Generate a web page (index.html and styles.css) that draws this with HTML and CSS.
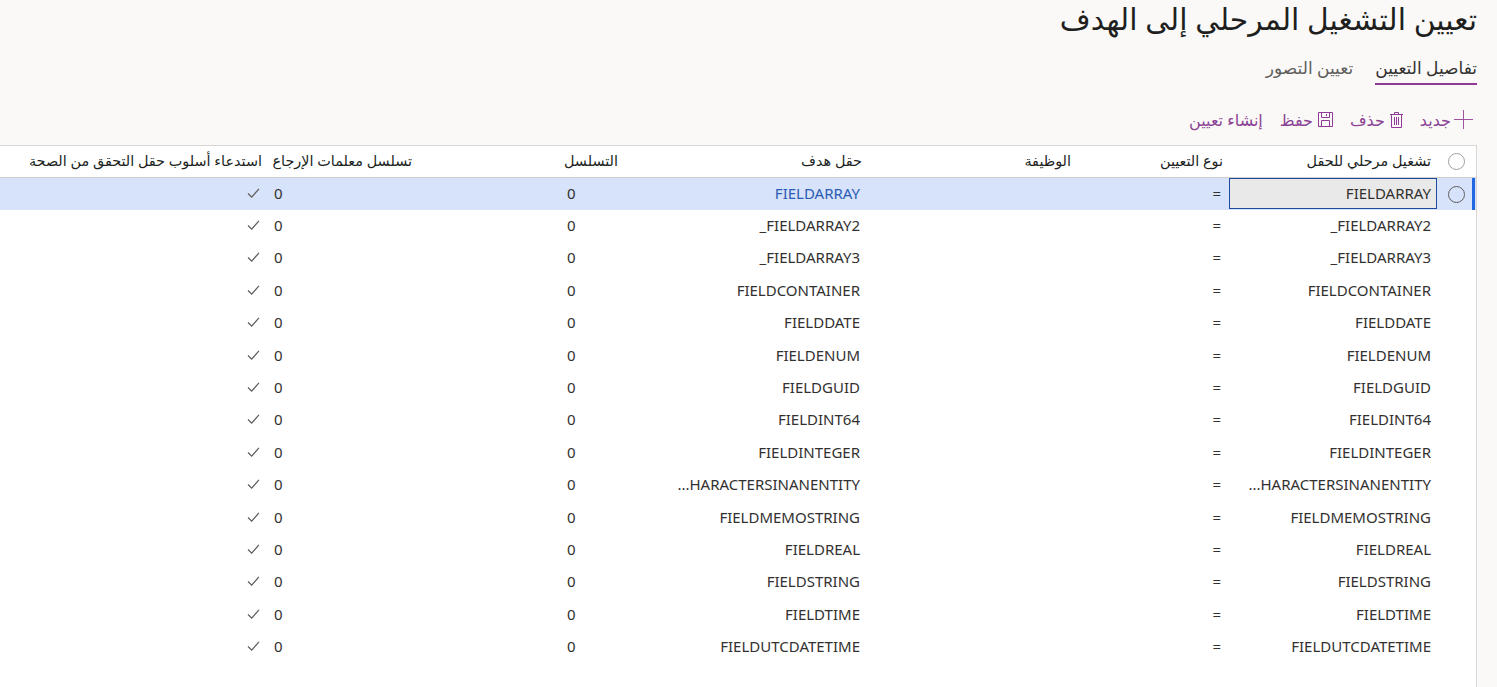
FILE: index.html
```html
<!DOCTYPE html>
<html lang="ar" dir="rtl">
<head>
<meta charset="utf-8">
<title>تعيين التشغيل المرحلي إلى الهدف</title>
<link rel="stylesheet" href="styles.css">
</head>
<body>
<main class="page">
  <h1 class="title">تعيين التشغيل المرحلي إلى الهدف</h1>
  <nav class="tabs">
    <a class="tab active">تفاصيل التعيين</a>
    <a class="tab">تعيين التصور</a>
  </nav>
  <div class="toolbar">
    <button class="tool"><svg class="icon plus" viewBox="0 0 19 19"><path d="M9.500 0v19M0 9.500h19"/></svg>جديد</button>
    <button class="tool"><svg class="icon trash" viewBox="0 0 13 16"><path d="M0 2.500h13M4.500 2.500v-2h4v2M1.500 2.500v13h10v-13M4.500 5v8M6.500 5v8M8.500 5v8"/></svg>حذف</button>
    <button class="tool"><svg class="icon save" viewBox="0 0 15 15"><path d="M.5.500h14v14H.5zM3.500.500v5h8v-5M3.500 14.500v-6h8v6M8.500 2v2"/></svg>حفظ</button>
    <button class="tool">إنشاء تعيين</button>
  </div>
  <section class="grid">
    <div class="row head">
      <div class="cell sel"><span class="radio"></span></div>
      <div class="cell">تشغيل مرحلي للحقل</div>
      <div class="cell">نوع التعيين</div>
      <div class="cell">الوظيفة</div>
      <div class="cell head-target">حقل هدف</div>
      <div class="cell">التسلسل</div>
      <div class="cell"></div>
      <div class="cell">تسلسل معلمات الإرجاع</div>
      <div class="cell">استدعاء أسلوب حقل التحقق من الصحة</div>
    </div>
    <div class="row selected">
      <div class="cell sel"><span class="radio"></span></div>
      <div class="cell val focus">FIELDARRAY</div>
      <div class="cell val eq">=</div>
      <div class="cell val"></div>
      <div class="cell val target">FIELDARRAY</div>
      <div class="cell val"><span class="num">0</span></div>
      <div class="cell"></div>
      <div class="cell val"><span class="num wide">0</span></div>
      <div class="cell val"><svg class="check" viewBox="0 0 14 11"><path d="M1 6l4 4 8-9"/></svg></div>
    </div>
    <div class="row">
      <div class="cell sel"></div>
      <div class="cell val field">FIELDARRAY2_</div>
      <div class="cell val eq">=</div>
      <div class="cell val"></div>
      <div class="cell val target">FIELDARRAY2_</div>
      <div class="cell val"><span class="num">0</span></div>
      <div class="cell"></div>
      <div class="cell val"><span class="num wide">0</span></div>
      <div class="cell val"><svg class="check" viewBox="0 0 14 11"><path d="M1 6l4 4 8-9"/></svg></div>
    </div>
    <div class="row">
      <div class="cell sel"></div>
      <div class="cell val field">FIELDARRAY3_</div>
      <div class="cell val eq">=</div>
      <div class="cell val"></div>
      <div class="cell val target">FIELDARRAY3_</div>
      <div class="cell val"><span class="num">0</span></div>
      <div class="cell"></div>
      <div class="cell val"><span class="num wide">0</span></div>
      <div class="cell val"><svg class="check" viewBox="0 0 14 11"><path d="M1 6l4 4 8-9"/></svg></div>
    </div>
    <div class="row">
      <div class="cell sel"></div>
      <div class="cell val field">FIELDCONTAINER</div>
      <div class="cell val eq">=</div>
      <div class="cell val"></div>
      <div class="cell val target">FIELDCONTAINER</div>
      <div class="cell val"><span class="num">0</span></div>
      <div class="cell"></div>
      <div class="cell val"><span class="num wide">0</span></div>
      <div class="cell val"><svg class="check" viewBox="0 0 14 11"><path d="M1 6l4 4 8-9"/></svg></div>
    </div>
    <div class="row">
      <div class="cell sel"></div>
      <div class="cell val field">FIELDDATE</div>
      <div class="cell val eq">=</div>
      <div class="cell val"></div>
      <div class="cell val target">FIELDDATE</div>
      <div class="cell val"><span class="num">0</span></div>
      <div class="cell"></div>
      <div class="cell val"><span class="num wide">0</span></div>
      <div class="cell val"><svg class="check" viewBox="0 0 14 11"><path d="M1 6l4 4 8-9"/></svg></div>
    </div>
    <div class="row">
      <div class="cell sel"></div>
      <div class="cell val field">FIELDENUM</div>
      <div class="cell val eq">=</div>
      <div class="cell val"></div>
      <div class="cell val target">FIELDENUM</div>
      <div class="cell val"><span class="num">0</span></div>
      <div class="cell"></div>
      <div class="cell val"><span class="num wide">0</span></div>
      <div class="cell val"><svg class="check" viewBox="0 0 14 11"><path d="M1 6l4 4 8-9"/></svg></div>
    </div>
    <div class="row">
      <div class="cell sel"></div>
      <div class="cell val field">FIELDGUID</div>
      <div class="cell val eq">=</div>
      <div class="cell val"></div>
      <div class="cell val target">FIELDGUID</div>
      <div class="cell val"><span class="num">0</span></div>
      <div class="cell"></div>
      <div class="cell val"><span class="num wide">0</span></div>
      <div class="cell val"><svg class="check" viewBox="0 0 14 11"><path d="M1 6l4 4 8-9"/></svg></div>
    </div>
    <div class="row">
      <div class="cell sel"></div>
      <div class="cell val field">FIELDINT64</div>
      <div class="cell val eq">=</div>
      <div class="cell val"></div>
      <div class="cell val target">FIELDINT64</div>
      <div class="cell val"><span class="num">0</span></div>
      <div class="cell"></div>
      <div class="cell val"><span class="num wide">0</span></div>
      <div class="cell val"><svg class="check" viewBox="0 0 14 11"><path d="M1 6l4 4 8-9"/></svg></div>
    </div>
    <div class="row">
      <div class="cell sel"></div>
      <div class="cell val field">FIELDINTEGER</div>
      <div class="cell val eq">=</div>
      <div class="cell val"></div>
      <div class="cell val target">FIELDINTEGER</div>
      <div class="cell val"><span class="num">0</span></div>
      <div class="cell"></div>
      <div class="cell val"><span class="num wide">0</span></div>
      <div class="cell val"><svg class="check" viewBox="0 0 14 11"><path d="M1 6l4 4 8-9"/></svg></div>
    </div>
    <div class="row">
      <div class="cell sel"></div>
      <div class="cell val field">HARACTERSINANENTITY...</div>
      <div class="cell val eq">=</div>
      <div class="cell val"></div>
      <div class="cell val target">HARACTERSINANENTITY...</div>
      <div class="cell val"><span class="num">0</span></div>
      <div class="cell"></div>
      <div class="cell val"><span class="num wide">0</span></div>
      <div class="cell val"><svg class="check" viewBox="0 0 14 11"><path d="M1 6l4 4 8-9"/></svg></div>
    </div>
    <div class="row">
      <div class="cell sel"></div>
      <div class="cell val field">FIELDMEMOSTRING</div>
      <div class="cell val eq">=</div>
      <div class="cell val"></div>
      <div class="cell val target">FIELDMEMOSTRING</div>
      <div class="cell val"><span class="num">0</span></div>
      <div class="cell"></div>
      <div class="cell val"><span class="num wide">0</span></div>
      <div class="cell val"><svg class="check" viewBox="0 0 14 11"><path d="M1 6l4 4 8-9"/></svg></div>
    </div>
    <div class="row">
      <div class="cell sel"></div>
      <div class="cell val field">FIELDREAL</div>
      <div class="cell val eq">=</div>
      <div class="cell val"></div>
      <div class="cell val target">FIELDREAL</div>
      <div class="cell val"><span class="num">0</span></div>
      <div class="cell"></div>
      <div class="cell val"><span class="num wide">0</span></div>
      <div class="cell val"><svg class="check" viewBox="0 0 14 11"><path d="M1 6l4 4 8-9"/></svg></div>
    </div>
    <div class="row">
      <div class="cell sel"></div>
      <div class="cell val field">FIELDSTRING</div>
      <div class="cell val eq">=</div>
      <div class="cell val"></div>
      <div class="cell val target">FIELDSTRING</div>
      <div class="cell val"><span class="num">0</span></div>
      <div class="cell"></div>
      <div class="cell val"><span class="num wide">0</span></div>
      <div class="cell val"><svg class="check" viewBox="0 0 14 11"><path d="M1 6l4 4 8-9"/></svg></div>
    </div>
    <div class="row">
      <div class="cell sel"></div>
      <div class="cell val field">FIELDTIME</div>
      <div class="cell val eq">=</div>
      <div class="cell val"></div>
      <div class="cell val target">FIELDTIME</div>
      <div class="cell val"><span class="num">0</span></div>
      <div class="cell"></div>
      <div class="cell val"><span class="num wide">0</span></div>
      <div class="cell val"><svg class="check" viewBox="0 0 14 11"><path d="M1 6l4 4 8-9"/></svg></div>
    </div>
    <div class="row">
      <div class="cell sel"></div>
      <div class="cell val field">FIELDUTCDATETIME</div>
      <div class="cell val eq">=</div>
      <div class="cell val"></div>
      <div class="cell val target">FIELDUTCDATETIME</div>
      <div class="cell val"><span class="num">0</span></div>
      <div class="cell"></div>
      <div class="cell val"><span class="num wide">0</span></div>
      <div class="cell val"><svg class="check" viewBox="0 0 14 11"><path d="M1 6l4 4 8-9"/></svg></div>
    </div>
  </section>
</main>
</body>
</html>
```
FILE: styles.css
```css
* { box-sizing: border-box; }
html, body { margin: 0; height: 100%; overflow: hidden; }
body {
  background: #faf9f8;
  color: #201f1e;
  font-family: "Noto Sans", "DejaVu Sans", sans-serif;
  font-size: 14px;
}
.page {
  height: 100%;
  padding-right: 20px;
  display: flex;
  flex-direction: column;
}
.title {
  margin: 0;
  height: 42px;
  font-size: 29.800px;
  line-height: 37px;
  font-weight: 400;
  color: #201f1e;
}
.tabs {
  display: flex;
  gap: 22px;
  height: 43px;
  padding-top: 15px;
}
.tab {
  height: 28px;
  line-height: 22px;
  font-size: 17px;
  color: #605e5c;
}
.tab.active {
  color: #323130;
  border-bottom: 2px solid #8f3a96;
}
.toolbar {
  display: flex;
  align-items: center;
  gap: 17px;
  height: 60px;
  padding-top: 9px;
  padding-right: 4px;
}
.tool {
  display: flex;
  align-items: center;
  gap: 5px;
  padding: 0;
  border: 0;
  background: none;
  font: inherit;
  font-size: 16px;
  color: #8a4394;
}
.icon { display: block; flex: none; fill: none; stroke: #8f3a96; stroke-width: 1; }
.plus { width: 19px; height: 19px; stroke: #a0529f; margin-left: -2px; }
.trash { width: 13px; height: 16px; }
.save { width: 15px; height: 15px; }
.grid {
  flex: 1;
  min-height: 0;
  background: #fff;
  border-top: 1px solid #d8d6d4;
  border-right: 1px solid #d8d6d4;
}
.row {
  display: grid;
  grid-template-columns: 39px 208px 152px 211px 242px 63px 143px 150px 1fr;
  height: 32.4px;
}
.head {
  height: 32px;
  border-bottom: 1px solid #d2d0ce;
  font-size: 14.400px;
  font-weight: 500;
  color: #201f1e;
}
.head .cell { padding-bottom: 2px; }
.head .sel { padding-bottom: 0; }
.head .head-target { padding-right: 4px; }
.selected {
  background: #d6e3fa;
  position: relative;
}
.selected::after {
  content: "";
  position: absolute;
  top: 0;
  bottom: 0;
  right: 1px;
  width: 3px;
  background: #2266e3;
}
.cell {
  display: flex;
  align-items: center;
  padding: 0 6px;
  white-space: nowrap;
  overflow: hidden;
  min-width: 0;
}
.val { color: #323130; font-size: 15px; padding-bottom: 3px; }
.eq { padding-right: 8px; }
.selected .target { color: #2b5bb5; }
.sel { justify-content: center; padding: 0; }
.radio {
  display: block;
  width: 17px;
  height: 17px;
  border: 1px solid #a19f9d;
  border-radius: 50%;
}
.selected .radio { border-color: #605e5c; }
.focus {
  background: #e9e9e9;
  border: 1px solid #1d4a9c;
  height: 31px;
  padding: 0 5px 1px;
}
.num { display: block; width: 51px; text-align: left; }
.num.wide { width: 138px; }
.check { width: 13px; height: 10px; margin-right: 2px; fill: none; stroke: #605e5c; stroke-width: 1.4; }
```
